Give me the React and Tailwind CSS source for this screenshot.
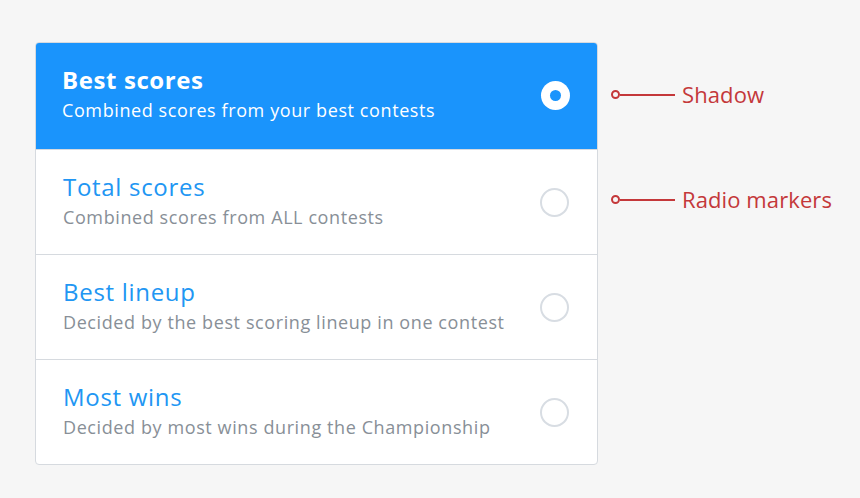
import React from 'react';

const options = [
    { title: 'Best scores', desc: 'Combined scores from your best contests' },
    { title: 'Total scores', desc: 'Combined scores from ALL contests' },
    { title: 'Best lineup', desc: 'Decided by the best scoring lineup in one contest' },
    { title: 'Most wins', desc: 'Decided by most wins during the Championship' },
];

function Note({ label }) {
    return (
        <div className="flex items-center h-[105px] text-[#c4383a]">
            <span className="w-[9px] h-[9px] rounded-full border-2 border-[#c4383a] ml-[611px]" />
            <span className="w-[55px] h-[2px] bg-[#c4383a]" />
            <span className="ml-[7px] text-[22px] tracking-[0.1px]">{label}</span>
        </div>
    );
}

export default function App() {
    return (
        <div
            className="w-[860px] h-[498px] bg-[#f6f6f6] relative overflow-hidden"
            style={{ fontFamily: '"Open Sans", "Noto Sans", sans-serif' }}
        >
            <div className="absolute left-0 top-[42px] flex flex-col">
                <Note label="Shadow" />
                <Note label="Radio markers" />
            </div>

            <div className="pt-[42px] pl-[35px]">
                <div className="w-[563px] rounded-[4px] border border-[#d6dadf] bg-white overflow-hidden">
                    {options.map((o, i) => {
                        const active = i === 0;
                        return (
                            <div
                                key={o.title}
                                className={
                                    active
                                        ? 'flex items-center h-[107px] bg-[#1a94fc] pl-[27px] pr-[28px] -m-px mb-0'
                                        : 'flex items-center h-[105px] pl-[27px] pr-[28px] border-t border-[#d6dadf]'
                                }
                            >
                                <div className="flex-1 -mt-[4px]">
                                    <div className={active ? 'text-[24px] font-bold text-white leading-[30px] tracking-[0.6px]' : 'text-[24px] text-[#2196f3] leading-[30px] tracking-[0.7px]'}>
                                        {o.title}
                                    </div>
                                    <div className={active ? 'text-[18px] text-white leading-[24px] tracking-[0.6px] mt-[3px]' : 'text-[18px] text-[#888f97] leading-[24px] tracking-[0.6px] mt-[3px]'}>
                                        {o.desc}
                                    </div>
                                </div>
                                {active ? (
                                    <span className="w-[29px] h-[29px] rounded-full bg-white flex items-center justify-center">
                                        <span className="w-[11px] h-[11px] rounded-full bg-[#1a94fc]" />
                                    </span>
                                ) : (
                                    <span className="w-[29px] h-[29px] rounded-full border-2 border-[#d8dde3]" />
                                )}
                            </div>
                        );
                    })}
                </div>
            </div>
        </div>
    );
}
